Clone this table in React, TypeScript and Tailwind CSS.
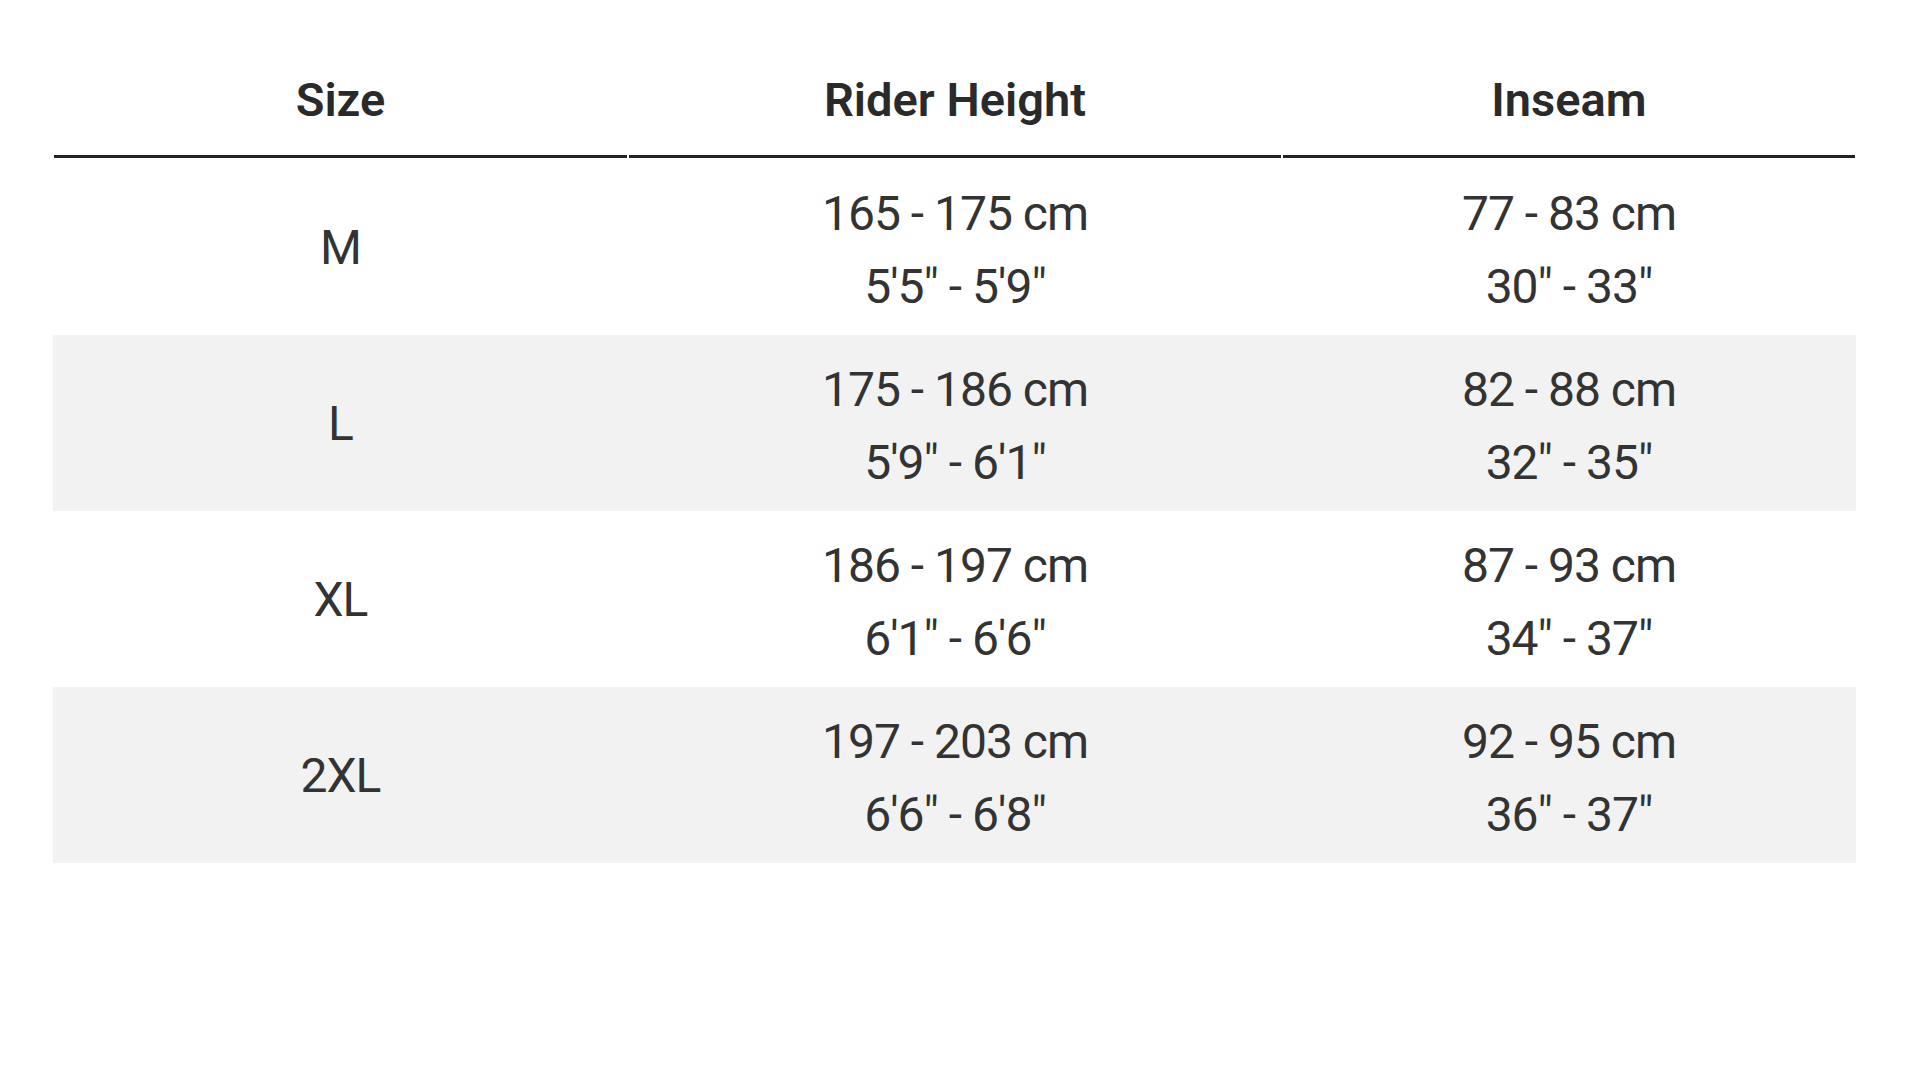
// SizeChart.tsx
const rows = [
  { size: "M", height: ["165 - 175 cm", `5'5" - 5'9"`], inseam: ["77 - 83 cm", `30" - 33"`] },
  { size: "L", height: ["175 - 186 cm", `5'9" - 6'1"`], inseam: ["82 - 88 cm", `32" - 35"`] },
  { size: "XL", height: ["186 - 197 cm", `6'1" - 6'6"`], inseam: ["87 - 93 cm", `34" - 37"`] },
  { size: "2XL", height: ["197 - 203 cm", `6'6" - 6'8"`], inseam: ["92 - 95 cm", `36" - 37"`] },
];

const headers = ["Size", "Rider Height", "Inseam"];

export default function App() {
  return (
    <div className="min-h-screen bg-white font-['Roboto',sans-serif] text-[#333]">
      <div className="ml-[53px] w-[1803px] grid grid-cols-[575px_654px_574px]">
        {headers.map((h) => (
          <div key={h} className="px-px">
            <div className="pt-[63px] pb-[19px] leading-[73px] text-[47px] font-semibold text-[#2a2a2a] text-center border-b-[3px] border-[#222]">
              {h}
            </div>
          </div>
        ))}

        {rows.map((r, i) => {
          const bg = i % 2 === 1 ? "bg-[#f2f2f2]" : "bg-white";
          return (
            <div key={r.size} className={`col-span-3 grid grid-cols-[575px_654px_574px] h-[176px] ${bg} ${i === 0 ? "mt-px" : ""}`}>
              <div className="flex items-center justify-center text-[48px] tracking-[-1px] leading-[73px] pt-[1px]">
                {r.size}
              </div>
              <div className="flex flex-col items-center justify-center text-[48px] tracking-[-1px] leading-[73px] pt-[5px]">
                <span>{r.height[0]}</span>
                <span>{r.height[1]}</span>
              </div>
              <div className="flex flex-col items-center justify-center text-[48px] tracking-[-1px] leading-[73px] pt-[5px]">
                <span>{r.inseam[0]}</span>
                <span>{r.inseam[1]}</span>
              </div>
            </div>
          );
        })}
      </div>
    </div>
  );
}
